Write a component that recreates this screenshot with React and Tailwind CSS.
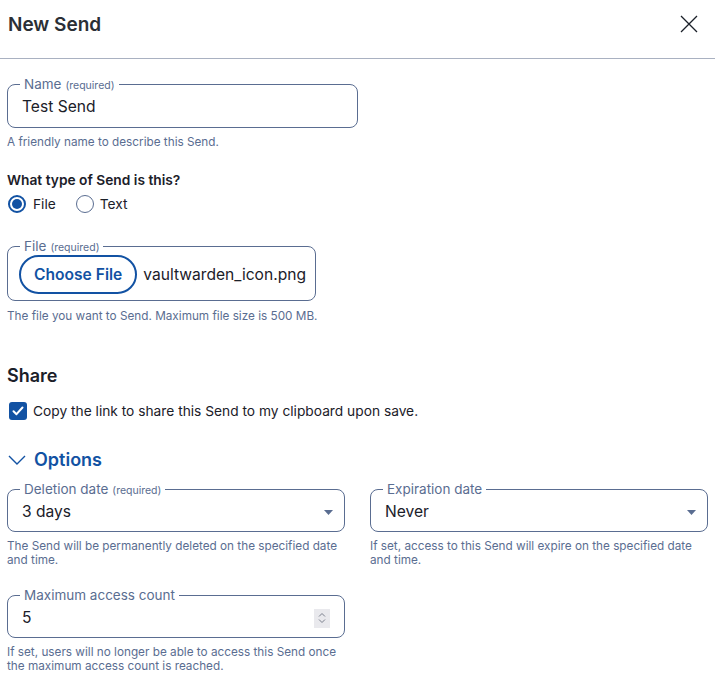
const FONT = { fontFamily: "Inter, Roboto, sans-serif" };

function Legend({ label, required }) {
  return (
    <legend className="ml-3 px-1 text-[13.5px] leading-[17px] text-[#5a6d91]">
      {label}
      {required && <span className="ml-1 text-[10.5px] leading-none">(required)</span>}
    </legend>
  );
}

function Hint({ children }) {
  return (
    <p className="mt-[7px] text-[11.75px] leading-[14px] text-[#5a6d91]">{children}</p>
  );
}

function SelectField({ label, required, value, hint }) {
  return (
    <div>
      <fieldset className="rounded-lg border border-[#5a6d91] p-0">
        <Legend label={label} required={required} />
        <div className="flex items-center justify-between pl-[14px] pr-[11px] pt-[2px] pb-[7px]">
          <span className="text-[15.6px] leading-6 text-[#1b2029]">{value}</span>
          <svg width="9" height="5" viewBox="0 0 9 5">
            <path d="M0 0h9L4.5 5z" fill="#5a6d91" />
          </svg>
        </div>
      </fieldset>
      <Hint>{hint}</Hint>
    </div>
  );
}

export default function App() {
  return (
    <div className="w-[715px] min-h-[676px] bg-white text-[#1b2029]" style={FONT}>
      {/* Header */}
      <div className="flex h-[59px] items-start justify-between border-b border-[#a9b1c1] pl-2 pr-[17px] pt-[13px]">
        <h1 className="text-[19px] font-semibold leading-6 text-[#2b2f36]">New Send</h1>
        <svg width="18" height="18" viewBox="0 0 18 18" className="mt-[2px]">
          <path d="M1 1l16 16M17 1L1 17" stroke="#1b2029" strokeWidth="1.3" fill="none" />
        </svg>
      </div>

      <div className="px-[7px]">
        {/* Name */}
        <fieldset className="mt-[17px] w-[351px] rounded-lg border border-[#5a6d91] p-0">
          <Legend label="Name" required />
          <div className="pl-[14px] pt-[2px] pb-2 text-[15.6px] leading-6">Test Send</div>
        </fieldset>
        <p className="mt-1.5 text-[11.75px] leading-4 text-[#5a6d91]">
          A friendly name to describe this Send.
        </p>

        {/* Type */}
        <h2 className="mt-5 text-[13.75px] font-semibold leading-5">What type of Send is this?</h2>
        <div className="mt-1 flex items-center text-[13.75px] leading-5">
          <span className="ml-px flex h-[18px] w-[18px] items-center justify-center rounded-full border-2 border-[#1252a3]">
            <span className="h-[10px] w-[10px] rounded-full bg-[#1252a3]" />
          </span>
          <span className="ml-[7px]">File</span>
          <span className="ml-5 h-[18px] w-[18px] rounded-full border border-[#5a6d91]" />
          <span className="ml-1.5">Text</span>
        </div>

        {/* File */}
        <fieldset className="mt-6 w-[309px] rounded-lg border border-[#5a6d91] p-0">
          <Legend label="File" required />
          <div className="flex items-center pl-[11px] pb-[6px]">
            <span className="flex h-[39px] items-center rounded-full border-2 border-[#1252a3] px-[13px] text-[15.6px] font-semibold text-[#1252a3]">
              Choose File
            </span>
            <span className="ml-1.5 text-[15.6px]">vaultwarden_icon.png</span>
          </div>
        </fieldset>
        <p className="mt-[7px] text-[11.75px] leading-4 text-[#5a6d91]">
          The file you want to Send. Maximum file size is 500 MB.
        </p>

        {/* Share */}
        <h2 className="mt-10 text-[18px] font-semibold leading-6">Share</h2>
        <div className="mt-[13px] flex items-center text-[13.75px] leading-5">
          <span className="ml-[2px] flex h-[18px] w-[18px] items-center justify-center rounded-[3px] bg-[#1252a3]">
            <svg width="12" height="10" viewBox="0 0 12 10">
              <path d="M1.5 5.2l3 3L10.5 1.5" stroke="#fff" strokeWidth="2" fill="none" strokeLinecap="round" strokeLinejoin="round" />
            </svg>
          </span>
          <span className="ml-1.5">Copy the link to share this Send to my clipboard upon save.</span>
        </div>

        {/* Options */}
        <div className="mt-[27px] flex items-center leading-6">
          <svg width="18" height="10" viewBox="0 0 18 10" className="ml-px">
            <path d="M1 1l8 8 8-8" stroke="#1252a3" strokeWidth="1.4" fill="none" />
          </svg>
          <span className="ml-[8px] text-[18px] font-semibold text-[#1252a3]">Options</span>
        </div>

        <div className="mt-[9px] grid grid-cols-2 gap-x-[25px] gap-y-5">
          <SelectField
            label="Deletion date"
            required
            value="3 days"
            hint="The Send will be permanently deleted on the specified date and time."
          />
          <SelectField
            label="Expiration date"
            value="Never"
            hint="If set, access to this Send will expire on the specified date and time."
          />
          <div>
            <fieldset className="rounded-lg border border-[#5a6d91] p-0">
              <Legend label="Maximum access count" />
              <div className="flex items-center justify-between pl-[14px] pr-[14px] pt-[2px] pb-[7px]">
                <span className="text-[15.6px] leading-6">5</span>
                <span className="flex h-[19px] w-[16px] flex-col items-center justify-center bg-[#e9e9ed]">
                  <svg width="8" height="12" viewBox="0 0 8 12">
                    <path d="M1 4.5l3-3 3 3M1 7.5l3 3 3-3" stroke="#7a7f8c" strokeWidth="1" fill="none" />
                  </svg>
                </span>
              </div>
            </fieldset>
            <Hint>
              If set, users will no longer be able to access this Send once the maximum access count is reached.
            </Hint>
          </div>
        </div>
      </div>
    </div>
  );
}
